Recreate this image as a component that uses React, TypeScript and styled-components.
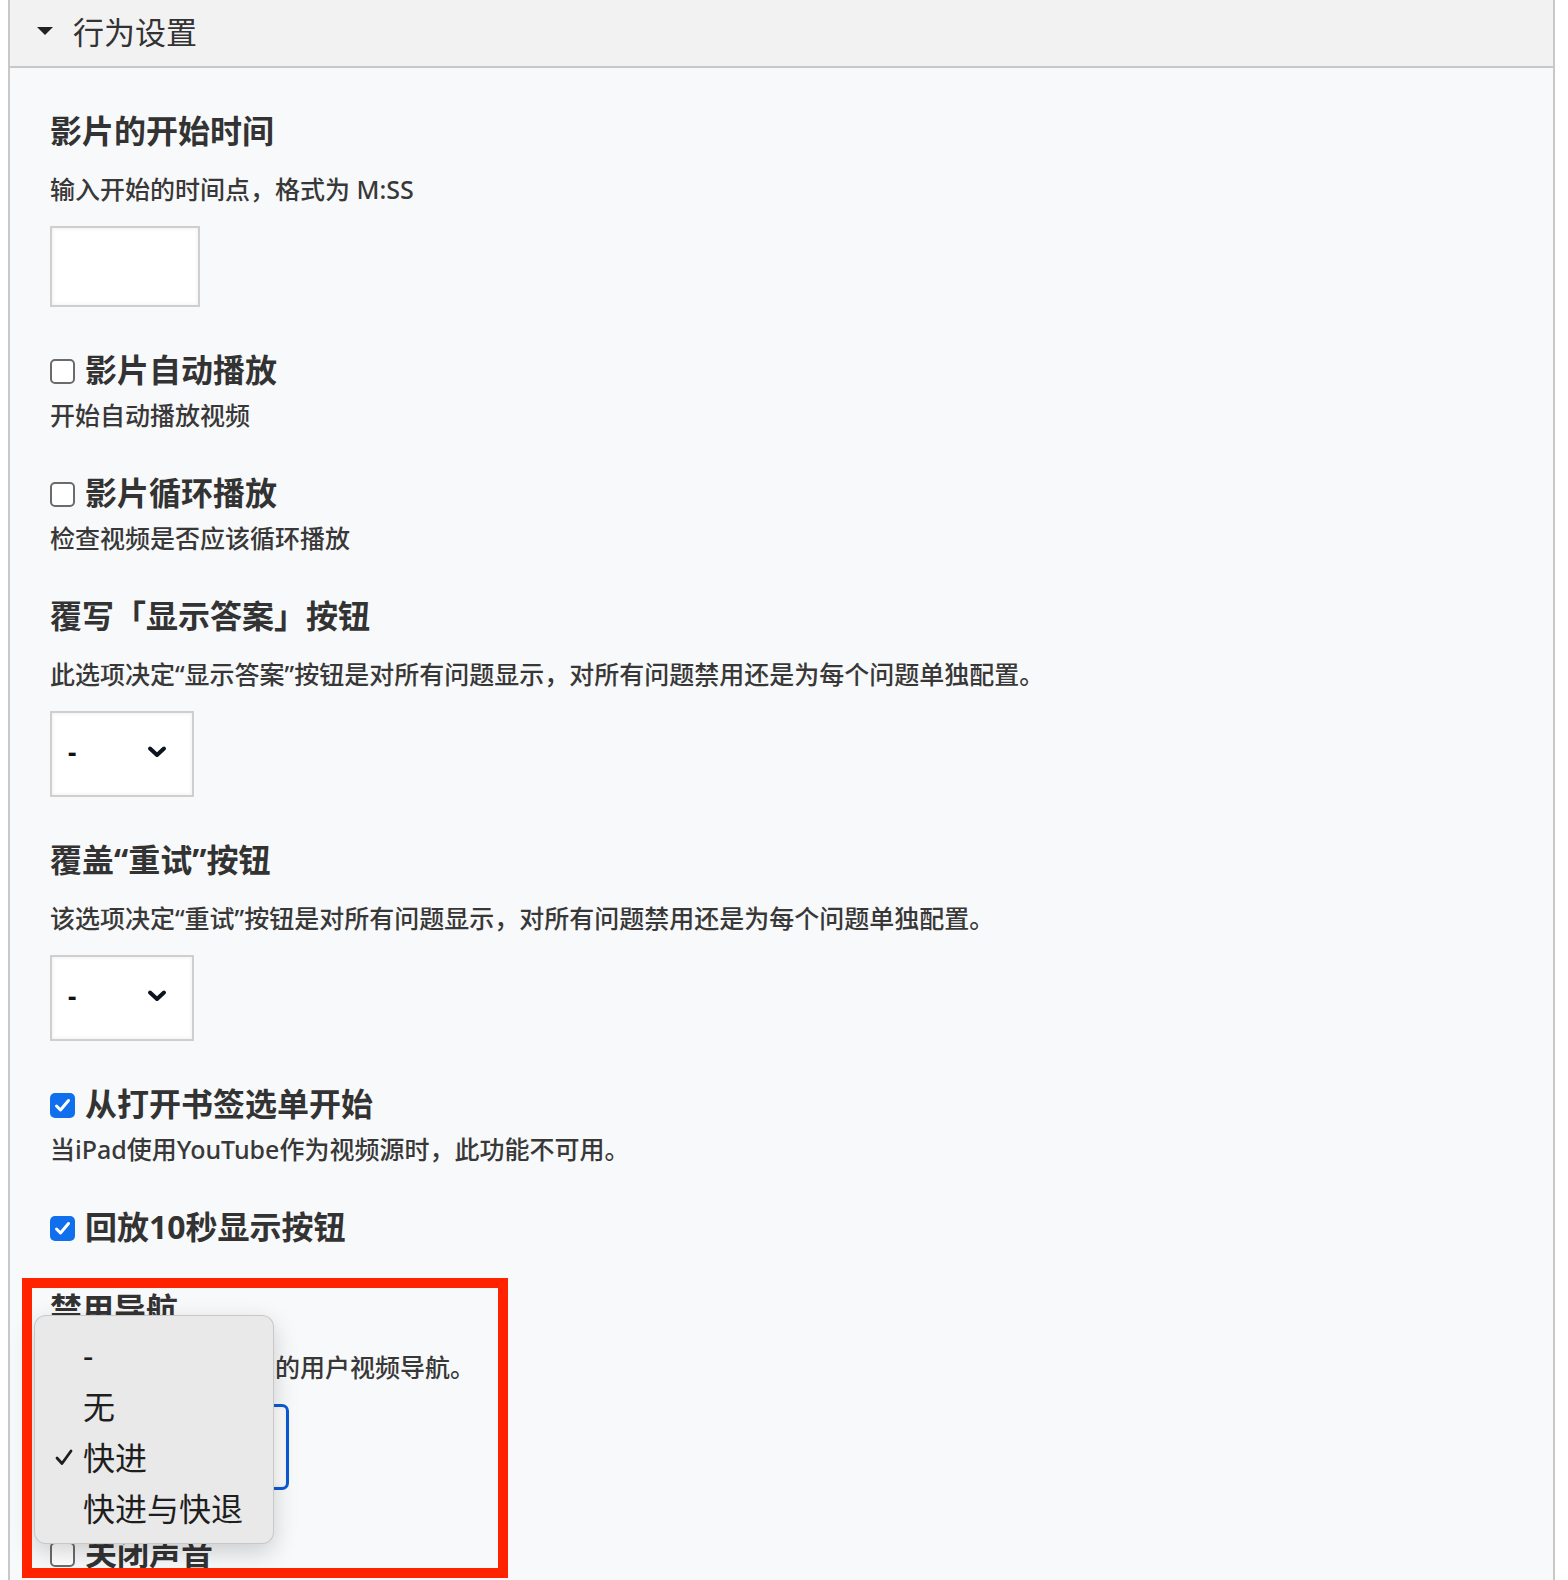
import {createGlobalStyle} from 'styled-components';
import styled from 'styled-components';

const GlobalStyle = createGlobalStyle`
  html, body {
    margin: 0;
    padding: 0;
    background: #fff;
  }
  body {
    padding: 0 13px 0 8px;
    font-family: "Noto Sans", "Noto Sans CJK SC", sans-serif;
    color: #333;
  }
`;

const Panel = styled.section`
  border-left: 2px solid #c8c8c8;
  border-right: 2px solid #c8c8c8;
  background: #f8f9fa;
  min-height: 1580px;
`;

const Header = styled.header`
  height: 68px;
  box-sizing: border-box;
  display: flex;
  align-items: center;
  gap: 20px;
  padding: 0 0 6px 27px;
  background: #f2f2f2;
  border-bottom: 2px solid #c8c8c8;
  font-size: 31px;
  color: #333;
`;

const Caret = styled.span`
  width: 0;
  height: 0;
  border-left: 8px solid transparent;
  border-right: 8px solid transparent;
  border-top: 8px solid #222;
  margin-top: 2px;
`;

const Body = styled.div`
  padding: 0 40px;
`;

const Field = styled.div`
  position: relative;
  margin-top: 44px;
`;

const Title = styled.h3`
  margin: 0;
  font-size: 32px;
  line-height: 38px;
  font-weight: 700;
  color: #333;
`;

const CheckRow = styled.label`
  display: flex;
  align-items: center;
  gap: 10px;
`;

const Box = styled.span<{$checked?: boolean}>`
  width: 25px;
  height: 25px;
  box-sizing: border-box;
  border-radius: 5px;
  display: flex;
  align-items: center;
  justify-content: center;
  flex-shrink: 0;
  margin-top: 2px;
  background: ${p => (p.$checked ? '#0f6fec' : '#fff')};
  border: ${p => (p.$checked ? 'none' : '2px solid #6b6b6b')};
`;

const Desc = styled.p<{$tight?: boolean}>`
  margin: ${p => (p.$tight ? '11px' : '24px')} 0 0;
  font-size: 25px;
  line-height: 30px;
  font-weight: 500;
  color: #383838;
  white-space: nowrap;
`;

const TextInput = styled.div`
  margin-top: 22px;
  width: 150px;
  height: 81px;
  box-sizing: border-box;
  background: #fff;
  border: 2px solid #cfcfcf;
  box-shadow: inset 0 0 4px rgba(0, 0, 0, 0.08);
`;

const Select = styled.div<{$wide?: boolean; $focused?: boolean}>`
  margin-top: 22px;
  width: ${p => (p.$wide ? '239px' : '144px')};
  height: 86px;
  box-sizing: border-box;
  display: flex;
  align-items: center;
  justify-content: space-between;
  padding: 0 24px 4px 16px;
  background: #fff;
  border: ${p => (p.$focused ? '3px solid #0b5bd3' : '2px solid #cfcfcf')};
  border-radius: ${p => (p.$focused ? '7px' : '0')};
  box-shadow: inset 0 0 4px rgba(0, 0, 0, 0.08);
  font-size: 26px;
  font-weight: 700;
  color: #111;
`;

const Popup = styled.ul`
  position: absolute;
  top: 25px;
  left: -16px;
  width: 240px;
  height: 229px;
  box-sizing: border-box;
  margin: 0;
  padding: 14px 0 0;
  list-style: none;
  background: #e9e9e9;
  border: 1px solid rgba(0, 0, 0, 0.14);
  border-radius: 12px;
  box-shadow: 0 8px 24px rgba(0, 0, 0, 0.18);
  z-index: 2;
`;

const Option = styled.li`
  position: relative;
  height: 51px;
  line-height: 51px;
  padding-left: 48px;
  font-size: 32px;
  color: #1e1e1e;
`;

const Tick = styled.svg`
  position: absolute;
  left: 20px;
  top: 17px;
`;

const Annotation = styled.div`
  position: absolute;
  top: -12px;
  left: -28px;
  width: 486px;
  height: 300px;
  box-sizing: border-box;
  border: 10px solid #ff2300;
  z-index: 3;
  pointer-events: none;
`;

const Chevron = () => (
  <svg width='22' height='14' viewBox='0 0 22 14'>
    <polyline points='4,3.5 11,10 18,3.5' fill='none' stroke='#0d1420' strokeWidth='4' strokeLinecap='round' strokeLinejoin='round' />
  </svg>
);

const Check = ({checked}: {checked?: boolean}) => (
  <Box $checked={checked}>
    {checked && (
      <svg width='17' height='15' viewBox='0 0 17 15'>
        <polyline points='2.5,8 6.5,12 14.5,2.5' fill='none' stroke='#fff' strokeWidth='3' strokeLinecap='round' strokeLinejoin='round' />
      </svg>
    )}
  </Box>
);

const navOptions = ['-', '无', '快进', '快进与快退'];

export default function App() {
  return (
    <>
      <GlobalStyle />
      <Panel>
        <Header>
          <Caret />
          <span>行为设置</span>
        </Header>
        <Body>
          <Field>
            <Title>影片的开始时间</Title>
            <Desc>输入开始的时间点，格式为 M:SS</Desc>
            <TextInput />
          </Field>

          <Field>
            <CheckRow>
              <Check />
              <Title>影片自动播放</Title>
            </CheckRow>
            <Desc $tight>开始自动播放视频</Desc>
          </Field>

          <Field>
            <CheckRow>
              <Check />
              <Title>影片循环播放</Title>
            </CheckRow>
            <Desc $tight>检查视频是否应该循环播放</Desc>
          </Field>

          <Field>
            <Title>覆写「显示答案」按钮</Title>
            <Desc>此选项决定“显示答案”按钮是对所有问题显示，对所有问题禁用还是为每个问题单独配置。</Desc>
            <Select>
              <span>-</span>
              <Chevron />
            </Select>
          </Field>

          <Field>
            <Title>覆盖“重试”按钮</Title>
            <Desc>该选项决定“重试”按钮是对所有问题显示，对所有问题禁用还是为每个问题单独配置。</Desc>
            <Select>
              <span>-</span>
              <Chevron />
            </Select>
          </Field>

          <Field>
            <CheckRow>
              <Check checked />
              <Title>从打开书签选单开始</Title>
            </CheckRow>
            <Desc $tight>当iPad使用YouTube作为视频源时，此功能不可用。</Desc>
          </Field>

          <Field>
            <CheckRow>
              <Check checked />
              <Title>回放10秒显示按钮</Title>
            </CheckRow>
          </Field>

          <Field>
            <Annotation />
            <Title>禁用导航</Title>
            <Desc>这些选项将禁用定义的用户视频导航。</Desc>
            <Select $wide $focused>
              <span>快进</span>
              <Chevron />
            </Select>
            <Popup>
              {navOptions.map(o => (
                <Option key={o}>
                  {o === '快进' && (
                    <Tick width='18' height='17' viewBox='0 0 18 17'>
                      <polyline points='2,9 7,14.5 16,2' fill='none' stroke='#1e1e1e' strokeWidth='2.8' strokeLinecap='round' strokeLinejoin='round' />
                    </Tick>
                  )}
                  {o}
                </Option>
              ))}
            </Popup>
          </Field>

          <Field>
            <CheckRow>
              <Check />
              <Title>关闭声音</Title>
            </CheckRow>
            <Desc $tight>选中此项将关闭视频声音，且无法开启。</Desc>
          </Field>
        </Body>
      </Panel>
    </>
  );
}
